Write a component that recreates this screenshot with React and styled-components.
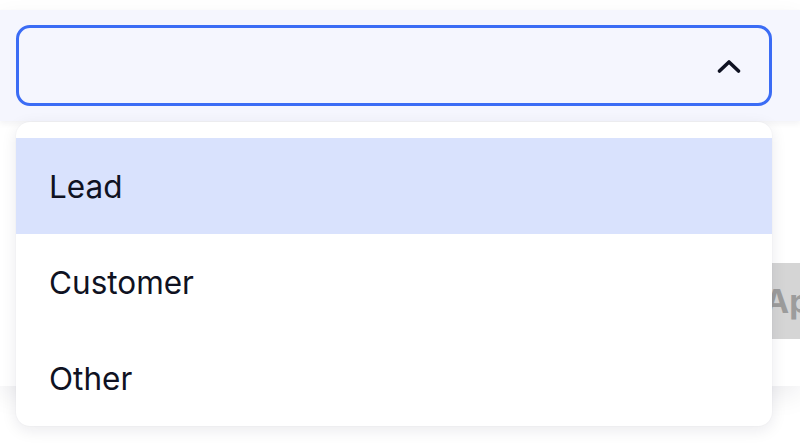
import React from 'react';
import styled, { createGlobalStyle } from 'styled-components';

const GlobalStyle = createGlobalStyle`
  html, body {
    margin: 0;
    padding: 0;
    background: #ffffff;
    font-family: Inter, "Noto Sans", "Liberation Sans", sans-serif;
    overflow: hidden;
  }
`;

const Page = styled.div`
  width: 800px;
  height: 446px;
  padding-top: 10px;
  box-sizing: border-box;
  position: relative;
  overflow: hidden;
`;

const Sheet = styled.div`
  width: 100%;
  box-shadow: 0 10px 24px rgba(20, 20, 40, 0.07);
`;

const Header = styled.div`
  background: #f5f6fe;
  padding: 15px 28px 15px 16px;
  box-shadow: 0 3px 6px rgba(20, 20, 60, 0.05);
  position: relative;
`;

const SelectBox = styled.div`
  height: 81px;
  box-sizing: border-box;
  border: 3.5px solid #3b6cf5;
  border-radius: 14px;
  display: flex;
  align-items: center;
  justify-content: flex-end;
  padding-right: 28px;
`;

const Body = styled.div`
  height: 265px;
  display: flex;
  align-items: flex-start;
  justify-content: flex-end;
  padding-top: 142px;
  box-sizing: border-box;
  background: #ffffff;
  overflow: hidden;
`;

const ApplyButton = styled.button`
  flex: 0 0 auto;
  height: 76px;
  margin-right: -80px;
  padding: 0 20px;
  border: none;
  border-radius: 4px;
  background: #d5d5d5;
  color: #9c9c9c;
  font-family: inherit;
  font-size: 33px;
  font-weight: 700;
`;

const Menu = styled.ul`
  position: absolute;
  top: 122px;
  left: 16px;
  width: 756px;
  margin: 0;
  padding: 16px 0 0;
  list-style: none;
  background: #ffffff;
  border-radius: 14px;
  box-shadow: 0 4px 16px rgba(20, 20, 50, 0.09), 0 0 2px rgba(20, 20, 50, 0.05);
  overflow: hidden;
`;

const Option = styled.li`
  height: 96px;
  display: flex;
  align-items: center;
  padding-left: 33px;
  font-size: 31.5px;
  color: #0f1222;
  background: ${p => (p.$active ? '#d9e2fd' : 'transparent')};
`;

const Chevron = () => (
  <svg width="24" height="16" viewBox="0 0 24 16" fill="none">
    <polyline
      points="2.5,13 12,4 21.5,13"
      stroke="#0f1222"
      strokeWidth="3.6"
      strokeLinecap="round"
      strokeLinejoin="round"
    />
  </svg>
);

const options = ['Lead', 'Customer', 'Other'];

export default function App() {
  return (
    <Page>
      <GlobalStyle />
      <Sheet>
        <Header>
          <SelectBox>
            <Chevron />
          </SelectBox>
        </Header>
        <Body>
          <ApplyButton>Apply</ApplyButton>
        </Body>
      </Sheet>
      <Menu>
        {options.map((o, i) => (
          <Option key={o} $active={i === 0}>{o}</Option>
        ))}
      </Menu>
    </Page>
  );
}
